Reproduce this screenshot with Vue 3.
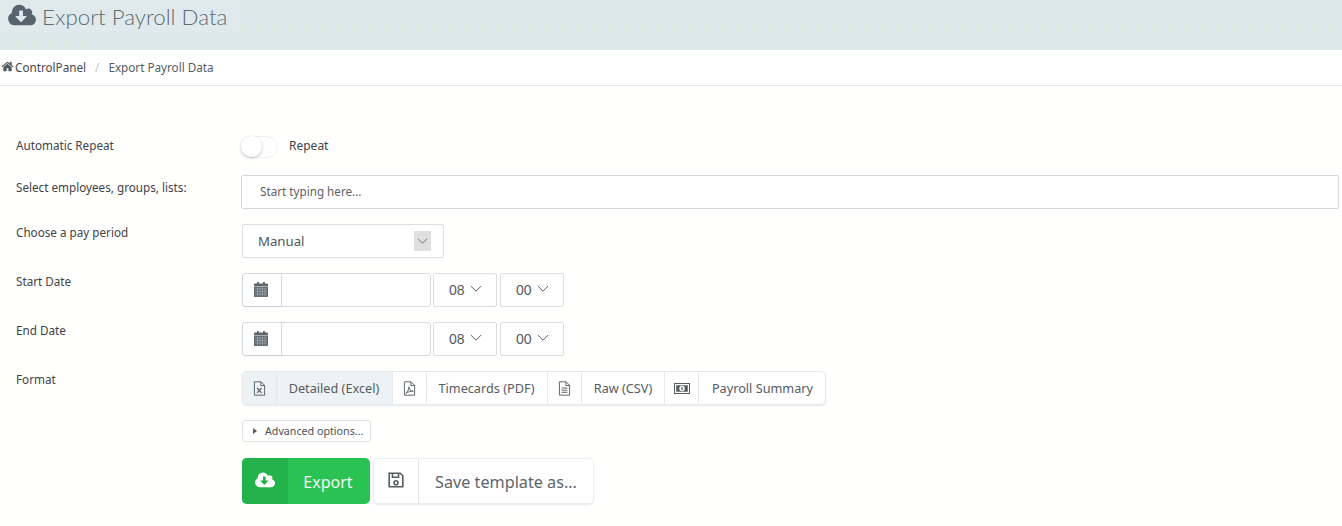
<script setup>
const cloud = 'M1280 928q0-14-9-23t-23-9h-224v-352q0-13-9.5-22.5t-22.5-9.5h-192q-13 0-22.5 9.5t-9.5 22.5v352h-224q-13 0-22.5 9.5t-9.5 22.5q0 14 9 23l352 352q9 9 23 9t23-9l351-351q10-12 10-24zm640 224q0 159-112.5 271.5t-271.5 112.5h-1088q-185 0-316.5-131.5t-131.5-316.5q0-130 70-240t188-165q-2-30-2-43 0-212 150-362t362-150q156 0 285.5 87t188.5 231q71-62 166-62 106 0 181 75t75 181q0 76-41 138 130 31 213.5 135.5t83.5 238.5z'
const home = 'M1472 992v480q0 26-19 45t-45 19h-384v-384h-256v384h-384q-26 0-45-19t-19-45v-480q0-1 .5-3t.5-3l575-474 575 474q1 2 1 6zm223-69l-62 74q-8 9-21 11h-3q-13 0-21-7l-692-577-692 577q-12 8-24 7-13-2-21-11l-62-74q-8-10-7-23.5t11-21.5l719-599q32-26 76-26t76 26l244 204v-195q0-14 9-23t23-9h192q14 0 23 9t9 23v408l219 182q10 8 11 21.5t-7 23.5z'
const dates = ['Start Date', 'End Date']
</script>

<template>
  <div class="page">
    <header class="banner">
      <svg class="title-icon" viewBox="0 0 1920 1792"><path :d="cloud" fill-rule="evenodd" /></svg>
      <h1>Export Payroll Data</h1>
    </header>
    <nav class="crumbs">
      <svg class="home" viewBox="0 0 1792 1792"><path :d="home" /></svg>
      <span class="crumb-first">ControlPanel</span>
      <span class="sep">/</span>
      <span>Export Payroll Data</span>
    </nav>

    <form class="form">
      <div class="row row-toggle">
        <label>Automatic Repeat</label>
        <div class="controls">
          <span class="toggle"><span class="knob"></span></span>
          <span class="toggle-text">Repeat</span>
        </div>
      </div>
      <div class="row row-search">
        <label>Select employees, groups, lists:</label>
        <div class="controls">
          <input class="search" type="text" placeholder="Start typing here..." />
        </div>
      </div>
      <div class="row">
        <label>Choose a pay period</label>
        <div class="controls">
          <div class="select">
            <span>Manual</span>
            <span class="select-arrow">
              <svg viewBox="0 0 12 8" width="11" height="7"><path d="M1 1l5 5 5-5" /></svg>
            </span>
          </div>
        </div>
      </div>
      <div v-for="d in dates" :key="d" class="row">
        <label>{{ d }}</label>
        <div class="controls">
          <div class="date">
            <span class="addon">
              <svg viewBox="0 0 14 15" width="14" height="15">
                <path d="M0 2.500a1 1 0 0 1 1-1h12a1 1 0 0 1 1 1v2H0z" />
                <rect x="3" y="0" width="2" height="3" rx=".5" />
                <rect x="9" y="0" width="2" height="3" rx=".5" />
                <path class="cal-body" d="M0 5h14v9a1 1 0 0 1-1 1H1a1 1 0 0 1-1-1z" />
                <path class="cal-grid" d="M1 7h12M1 9.500h12M1 12h12M3.500 5.500v9M6 5.500v9M8.500 5.500v9M11 5.500v9" />
              </svg>
            </span>
            <input class="date-input" type="text" />
          </div>
          <div class="time">08<svg viewBox="0 0 12 8" width="12" height="8"><path d="M.8 1l5.200 5.200L11.200 1" /></svg></div>
          <div class="time time-last">00<svg viewBox="0 0 12 8" width="12" height="8"><path d="M.8 1l5.200 5.200L11.200 1" /></svg></div>
        </div>
      </div>
      <div class="row">
        <label>Format</label>
        <div class="controls">
          <div class="segments">
            <span class="seg-icon active">
              <svg viewBox="0 0 14 16" width="13" height="15"><path class="line" d="M1.500.8h7.200l3.800 3.800v10.600h-11zM8.500.8v4h4" /><path class="line bold" d="M4.400 7.400l4.800 5.400M9.200 7.400l-4.800 5.400" /></svg>
            </span>
            <span class="seg-text active seg-detailed">Detailed (Excel)</span>
            <span class="seg-icon">
              <svg viewBox="0 0 14 16" width="13" height="15"><path class="line" d="M1.500.8h7.200l3.800 3.800v10.600h-11zM8.500.8v4h4" /><path class="line" d="M3 13.200c2-1 3.200-4 3.400-7 .3 3 2 4.600 4.600 4.800-3-.2-5.600.6-8 2.200z" /></svg>
            </span>
            <span class="seg-text seg-time">Timecards (PDF)</span>
            <span class="seg-icon">
              <svg viewBox="0 0 14 16" width="13" height="15"><path class="line" d="M1.500.8h7.200l3.800 3.800v10.600h-11zM8.500.8v4h4M3.800 7.500h6.400M3.800 9.800h6.400M3.800 12.100h6.400" /></svg>
            </span>
            <span class="seg-text seg-raw">Raw (CSV)</span>
            <span class="seg-icon">
              <svg viewBox="0 0 16 11" width="16" height="11"><path fill-rule="evenodd" d="M0 0h16v11H0zM1 1v9h14V1z" /><path d="M2.200 2.200h11.600v6.600H2.200z" /><circle cx="8" cy="5.500" r="2.700" fill="#fff" /><rect x="7.400" y="3.900" width="1.300" height="3.200" /></svg>
            </span>
            <span class="seg-text seg-pay">Payroll Summary</span>
          </div>
        </div>
      </div>
      <div class="row row-advanced">
        <label></label>
        <div class="controls">
          <button type="button" class="advanced"><i class="caret"></i>Advanced options...</button>
        </div>
      </div>
      <div class="row row-actions">
        <label></label>
        <div class="controls">
          <button type="button" class="export">
            <span class="export-icon"><svg viewBox="0 0 1920 1792" width="20" height="19"><path :d="cloud" fill-rule="evenodd" /></svg></span>
            <span class="export-text">Export</span>
          </button>
          <button type="button" class="save">
            <span class="save-icon">
              <svg viewBox="0 0 16 16" width="16" height="16"><path class="line thick" d="M1.200 1.200h11l2.600 2.600v11H1.200z" /><path class="line thick" d="M4.500 1.200v4h6v-4" /><circle class="line thick" cx="8" cy="10.800" r="2" /></svg>
            </span>
            <span class="save-text">Save template as...</span>
          </button>
        </div>
      </div>
    </form>
  </div>
</template>

<style>
html, body { margin: 0; background: #fffffe; }
</style>

<style scoped>
.page {
  width: 1342px;
  height: 526px;
  overflow: hidden;
  font-family: "Noto Sans", "Open Sans", sans-serif;
  font-size: 11.700px;
  color: #3f4347;
}
.banner {
  height: 50px;
  display: flex;
  align-items: flex-start;
  padding-left: 8px;
  box-sizing: border-box;
  background-color: #dde8ea;
  background-image:
    linear-gradient(#e0eaec, #e0eaec),
    repeating-linear-gradient(90deg, #dae9e1 0 8px, transparent 8px 16px),
    repeating-linear-gradient(90deg, #dde9e3 0 8px, transparent 8px 16px);
  background-size: 240px 32px, 1102px 8px, 76px 6px;
  background-position: 0 0, 240px 24px, 16px 41px;
  background-repeat: no-repeat;
}
.title-icon {
  width: 28px;
  height: 26px;
  margin-top: 3px;
  fill: #57646d;
}
h1 {
  margin: 0 0 0 6px;
  font-family: "Lato", sans-serif;
  font-weight: 300;
  font-size: 22.300px;
  line-height: 33px;
  color: #606b73;
}
.crumbs {
  height: 36px;
  box-sizing: border-box;
  border-bottom: 1px solid #e6e6e6;
  background: #fff;
  display: flex;
  align-items: center;
  padding: 0 0 2px 1px;
  color: #555c62;
}
.home { width: 13px; height: 13px; fill: #50575d; margin-right: 1px; }
.crumb-first { color: #44494e; }
.sep { margin: 0 9px; color: #c8c8c8; }
.form { padding-top: 49px; }
.row {
  display: grid;
  grid-template-columns: 241px 1fr;
  margin-bottom: 15px;
  min-height: 34px;
}
.row-toggle { min-height: 25px; }
.row-advanced { min-height: 22px; margin-bottom: 16px; }
.row label {
  padding: 0 0 0 16px;
  line-height: 16px;
  color: #3f4347;
}
.row-toggle label { padding-top: 2px; }
.row-search label { padding-top: 4px; }
.controls {
  display: flex;
  align-items: flex-start;
}
.toggle {
  width: 37px;
  height: 22px;
  margin-top: 1px;
  border: 1px solid #f1f1f1;
  border-radius: 12px;
  box-sizing: border-box;
  position: relative;
  background: #fff;
}
.knob {
  position: absolute;
  left: -1px;
  top: -1px;
  width: 21px;
  height: 21px;
  background: #fff;
  border-radius: 50%;
  box-shadow: 0 1px 3px rgba(60, 60, 90, .35);
}
.toggle-text { margin: 3px 0 0 11px; line-height: 16px; font-size: 12px; }
.search {
  width: 1098px;
  height: 34px;
  box-sizing: border-box;
  border: 1px solid #d5d7da;
  border-radius: 2px;
  padding: 0 17px 2px 18px;
  font: 11.700px "Noto Sans", sans-serif;
  background: #fff;
  outline: none;
}
.search::placeholder { color: #5d6368; opacity: 1; }
.select {
  margin-left: 1px;
  width: 202px;
  height: 34px;
  box-sizing: border-box;
  border: 1px solid #dcdee0;
  border-radius: 2px;
  background: #fff;
  display: flex;
  align-items: center;
  justify-content: space-between;
  padding: 0 12px 0 15px;
  font-size: 13.200px;
  color: #50565b;
}
.select-arrow {
  width: 17px;
  height: 20px;
  background: #dfdfdf;
  display: flex;
  align-items: center;
  justify-content: center;
}
.select-arrow path, .time path { fill: none; stroke: #5a5f64; stroke-width: 1; }
.date {
  margin-left: 1px;
  width: 189px;
  height: 34px;
  box-sizing: border-box;
  border: 1px solid #d8dadd;
  border-radius: 3px;
  display: flex;
  background: #fff;
}
.addon {
  width: 39px;
  flex: none;
  box-sizing: border-box;
  border-right: 1px solid #d8dadd;
  display: flex;
  align-items: center;
  justify-content: center;
  box-shadow: 0 1px 2px rgba(120, 130, 170, .15);
  fill: #5b656d;
  padding: 0 2px 2px 0;
}
.cal-body { fill: #5f686f; }
.cal-grid { fill: none; stroke: #a5abb0; stroke-width: .7; }
.date-input {
  border: 0;
  outline: none;
  min-width: 0;
  flex: 1;
  background: transparent;
}
.time {
  margin-left: 2px;
  width: 64px;
  height: 34px;
  box-sizing: border-box;
  border: 1px solid #dcdee0;
  border-radius: 2px;
  background: #fff;
  display: flex;
  align-items: center;
  padding-left: 15px;
  gap: 5px;
  font-family: "Liberation Sans", sans-serif;
  font-size: 14px;
  color: #55595d;
}
.time svg { margin-top: -2px; }
.time-last { margin-left: 3px; }
.segments {
  margin-left: 1px;
  display: flex;
  height: 34px;
  box-sizing: border-box;
  border-radius: 5px;
  border: 1px solid #e7e9ec;
  box-shadow: 0 1px 2px rgba(110, 120, 160, .18);
  background: #fff;
  overflow: hidden;
}
.seg-icon {
  width: 34px;
  flex: none;
  box-sizing: border-box;
  border-right: 1px solid #e7e9ec;
  display: flex;
  align-items: center;
  justify-content: center;
  fill: #555c62;
}
.seg-text {
  box-sizing: border-box;
  display: flex;
  align-items: center;
  justify-content: center;
  border-right: 1px solid #e7e9ec;
  font-size: 12.700px;
  color: #565c62;
}
.seg-detailed { width: 116px; padding-right: 1px; }
.seg-time { width: 121px; padding-right: 1px; }
.seg-raw { width: 83px; }
.seg-pay { width: 126px; border-right: 0; padding-left: 1px; }
.active { background: #edf2f5; }
svg .line { fill: none; stroke: #555c62; stroke-width: 1; }
svg .bold { stroke-width: 1.300; }
.advanced {
  margin: 0 0 0 1px;
  width: 129px;
  height: 22px;
  padding: 0 0 0 10px;
  border: 1px solid #e4e4e4;
  border-radius: 3px;
  background: #fff;
  font: 10.700px "Noto Sans", sans-serif;
  color: #4c5257;
  display: flex;
  align-items: center;
}
.caret {
  width: 0;
  height: 0;
  border-left: 4px solid #555c62;
  border-top: 3.500px solid transparent;
  border-bottom: 3.500px solid transparent;
  margin-right: 8px;
}
.export {
  margin: 0 0 0 1px;
  padding: 0;
  width: 128px;
  height: 46px;
  border: 0;
  border-radius: 5px;
  overflow: hidden;
  background: #2bc254;
  display: flex;
  color: #fff;
  font: 16px "Noto Sans", sans-serif;
}
.export-icon {
  width: 46px;
  height: 100%;
  background: #23b34a;
  fill: #fff;
  display: flex;
  align-items: center;
  justify-content: center;
  padding-bottom: 2px;
  box-sizing: border-box;
}
.export-text {
  flex: 1;
  height: 100%;
  display: flex;
  align-items: center;
  justify-content: center;
  color: #f2fbf4;
  padding: 2px 2px 0 0;
  box-sizing: border-box;
}
.save {
  margin: 0 0 0 3px;
  padding: 0;
  width: 221px;
  height: 46px;
  border: 1px solid #eceef0;
  border-radius: 5px;
  background: #fff;
  display: flex;
  box-shadow: 0 1px 2px rgba(110, 120, 160, .15);
  font: 16.200px "Noto Sans", sans-serif;
  color: #5e646a;
}
.save-icon {
  width: 45px;
  height: 100%;
  box-sizing: border-box;
  border-right: 1px solid #e4e6e9;
  display: flex;
  align-items: center;
  justify-content: center;
  padding-bottom: 3px;
}
svg .thick { stroke-width: 1.600; }
.save-text {
  flex: 1;
  height: 100%;
  display: flex;
  align-items: center;
  justify-content: center;
  padding-top: 2px;
  box-sizing: border-box;
}
</style>
